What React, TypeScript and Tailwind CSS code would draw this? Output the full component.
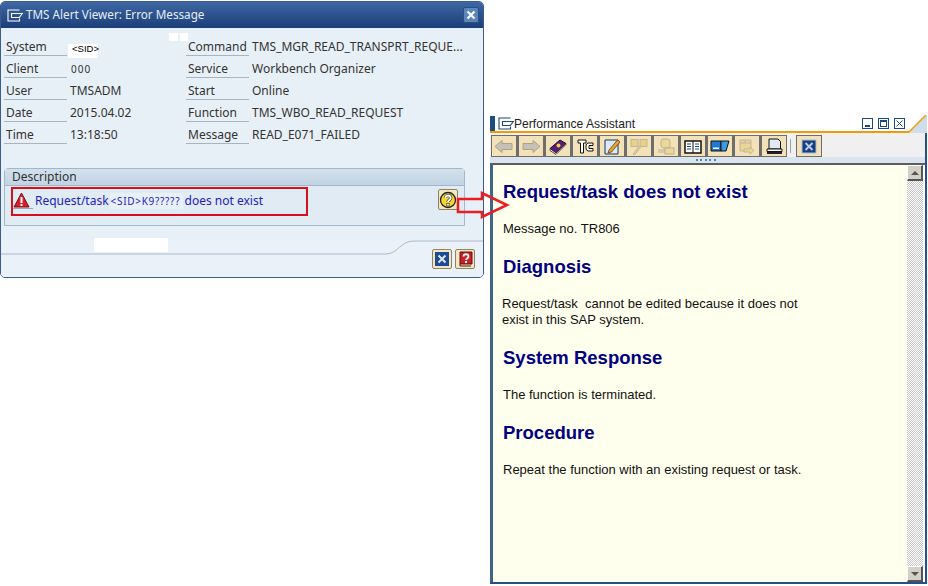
import type { ReactNode } from "react";

const leftRows = [
  ["System", "", "Command", "TMS_MGR_READ_TRANSPRT_REQUE..."],
  ["Client", "000", "Service", "Workbench Organizer"],
  ["User", "TMSADM", "Start", "Online"],
  ["Date", "2015.04.02", "Function", "TMS_WBO_READ_REQUEST"],
  ["Time", "13:18:50", "Message", "READ_E071_FAILED"],
];

function WindowGlyph({ color }: { color: string }) {
  return (
    <svg width="16" height="13" viewBox="0 0 16 13" fill="none" stroke={color} strokeWidth="1.1">
      <path d="M12.5 1H1v11h11.500V9.500M4.500 4.500h10.800l-3 4H4.500z" />
    </svg>
  );
}

function ToolBtn({ children, dim }: { children?: ReactNode; dim?: boolean }) {
  return (
    <div className="w-[24px] h-[20px] bg-[#f3e2b8] flex items-center justify-center">
      <svg width="20" height="17" viewBox="0 0 20 17" className={dim ? "opacity-40" : ""}>
        {children}
      </svg>
    </div>
  );
}

function SmallBtn({ children, tall }: { children: ReactNode; tall?: boolean }) {
  return (
    <div className={`w-[20px] ${tall ? "h-[21px]" : "h-[20px]"} bg-[#f4e7c0] border border-[#8a8468] rounded-[2px] flex items-center justify-center`}>
      {children}
    </div>
  );
}

function CloseIcon({ size = 14 }: { size?: number }) {
  return (
    <svg width={size} height={size} viewBox="0 0 14 14">
      <rect width="14" height="14" fill="#1d4a94" />
      <path d="M3.500 3.500l7 7M10.500 3.500l-7 7" stroke="#dfe8f5" strokeWidth="2" />
    </svg>
  );
}

function Dialog() {
  return (
    <div className="absolute left-0 top-[1px] w-[484px] h-[277px] rounded-[5px] border border-[#3c5c8c] bg-[#e8f0f7] overflow-hidden flex flex-col">
      <div className="h-[26px] shrink-0 bg-gradient-to-b from-[#3f68a4] to-[#1b3e78] flex items-center pl-[6px] pr-[4px] text-[11.700px]">
        <WindowGlyph color="#ffffff" />
        <span className="ml-[3px] text-[#e6edf6]">TMS Alert Viewer: Error Message</span>
        <div className="ml-auto w-[16px] h-[16px] bg-[#5c86b8] border border-[#2b4f82] rounded-[2px] flex items-center justify-center">
          <svg width="10" height="10" viewBox="0 0 10 10">
            <path d="M1.500 1.500l7 7M8.500 1.500l-7 7" stroke="#ffffff" strokeWidth="2" />
          </svg>
        </div>
      </div>

      <div className="pt-[8px] flex flex-col">
        {leftRows.map((r) => (
          <div key={r[0]} className="h-[22px] flex text-[12px] text-[#333333]">
            <div className="w-[63px] h-[20px] ml-[3px] pl-[2px] border-b border-[#a8b4c0] leading-[21px]">{r[0]}</div>
            <div className="w-[119px] leading-[21px]">
              {r[0] === "System" ? (
                <div className="ml-[1px] mt-[8px] bg-white w-[30px] h-[14px] pl-[4px] pt-[1px] font-['Liberation_Sans',sans-serif] text-[9.500px] leading-[8px] text-black">
                  {"<SID>"}
                </div>
              ) : r[0] === "Client" ? (
                <span className="pl-[4px] tracking-[1px] text-[10px]">{r[1]}</span>
              ) : (
                <span className="pl-[3px]">{r[1]}</span>
              )}
            </div>
            <div className="w-[63px] h-[20px] pl-[2px] border-b border-[#a8b4c0] leading-[21px]">{r[2]}</div>
            <div className="pl-[3px] leading-[21px]">{r[3]}</div>
          </div>
        ))}
      </div>

      <div className="mt-[22px] mx-[3px] h-[58px] w-[461px] border border-[#a3b7cb] rounded-t-[4px] bg-[#e1ebf4] flex flex-col">
        <div className="h-[17px] bg-gradient-to-b from-[#d3e1ee] to-[#c1d3e4] border-b border-[#a3b7cb] pl-[7px] text-[12px] leading-[16px] text-[#333333]">
          Description
        </div>
        <div className="flex-1 relative flex items-start pt-[7px] pl-[8px]">
          <div className="w-[20px] h-[17px] -mt-[1px] border-b border-[#9aa8b6]">
            <svg width="17" height="16" viewBox="0 0 17 16">
              <path d="M8.500 1L16 15H1z" fill="#d8202a" stroke="#7a1010" strokeWidth="1" />
              <rect x="7.500" y="5" width="2" height="6" fill="#fff" />
              <rect x="7.500" y="12" width="2" height="2" fill="#fff" />
            </svg>
          </div>
          <span className="ml-[2px] text-[12px] leading-[16px] text-[#2222bb]">Request/task</span>
          <span className="ml-[1px] pl-[1px] text-[10px] tracking-[0.7px] leading-[16px] text-[#2222bb] bg-[#e9f1f8] w-[73px] whitespace-nowrap">{"<SID>K9?????"}</span>
          <span className="ml-[2px] text-[12px] leading-[16px] text-[#2222bb]">does not exist</span>
          <div className="absolute right-[6px] top-[3px]">
            <SmallBtn tall>
              <svg width="18" height="18" viewBox="0 0 18 18">
                <circle cx="9" cy="9" r="7.500" fill="#f8d62e" stroke="#222" strokeWidth="1.300" />
                <path d="M6.300 7c0-3.400 5.400-3.400 5.400 0 0 2.200-2.700 2-2.700 4" fill="none" stroke="#222" strokeWidth="3.100" />
                <path d="M6.300 7c0-3.400 5.400-3.400 5.400 0 0 2.200-2.700 2-2.700 4" fill="none" stroke="#fff" strokeWidth="1.900" />
                <rect x="7.800" y="12.500" width="2.400" height="2.400" fill="#fff" stroke="#222" strokeWidth=".6" />
              </svg>
            </SmallBtn>
          </div>
        </div>
      </div>

      <div className="mt-[14px] flex-1 relative bg-[#eaf1f8] flex items-end justify-end pr-[8px] pb-[8px] gap-[3px]">
        <svg className="absolute left-0 top-0 w-full h-[20px]" viewBox="0 0 482 20" fill="none">
          <path d="M0 14H385C397 14 399 1 413 1H482" stroke="#a9b9c9" strokeWidth="1" />
        </svg>
        <SmallBtn>
          <CloseIcon />
        </SmallBtn>
        <SmallBtn>
          <svg width="15" height="16" viewBox="0 0 15 16">
            <path d="M2 1h12v12H2z" fill="#c8202a" stroke="#5a1010" />
            <path d="M2 13v2h11" fill="none" stroke="#5a1010" />
            <path d="M5.500 5.500c0-3 5-3 5 0 0 2-2.500 1.800-2.500 3.500" fill="none" stroke="#fff" strokeWidth="1.800" />
            <rect x="7" y="10" width="2" height="2" fill="#fff" />
          </svg>
        </SmallBtn>
      </div>
    </div>
  );
}

function Assistant() {
  return (
    <div className="absolute left-[490px] top-[115px] w-[437px] h-[469px] flex flex-col bg-[#f0f0f0] border-r-2 border-b-2 border-[#23508a] font-['Liberation_Sans',sans-serif]">
      <div className="h-[18px] shrink-0 bg-white border-b-[2px] border-[#f59a00] flex items-center relative">
        <div className="w-[5px] h-[15px] bg-[#1c4e80]" />
        <div className="ml-[3px] flex items-center">
          <WindowGlyph color="#17497f" />
        </div>
        <span className="text-[12.100px] leading-none mt-[2px] text-[#222]">Performance Assistant</span>
        <div className="absolute right-[20px] top-[3px] flex gap-[5px]">
          {[0, 1, 2].map((i) => (
            <div key={i} className="w-[11px] h-[11px] border border-[#17497f] bg-white relative flex items-center justify-center">
              {i === 0 && <div className="absolute left-[2px] bottom-[1px] w-[5px] h-[2px] bg-[#17497f]" />}
              {i === 1 && <div className="w-[7px] h-[7px] border border-[#17497f] border-t-2" />}
              {i === 2 && (
                <svg width="7" height="7" viewBox="0 0 7 7">
                  <path d="M.5.5l6 6M6.500.5l-6 6" stroke="#17497f" strokeWidth="1" />
                </svg>
              )}
            </div>
          ))}
        </div>
        <svg className="absolute right-[-2px] bottom-[-2px]" width="18" height="18" viewBox="0 0 18 18">
          <path d="M0 17L17 0H18V18H0z" fill="#cfdcea" />
          <path d="M0 17L17 0" stroke="#f59a00" strokeWidth="1.500" />
        </svg>
      </div>

      <div className="h-[24px] shrink-0 flex items-center pl-[1px] pt-[2px]">
        <div className="flex gap-[3px] bg-[#6e6e6e] py-[1px] px-[1px]">
          <ToolBtn dim>
            <path d="M1 8.500L8 2.500v3h10v6H8v3z" fill="#7f93b5" stroke="#444" />
          </ToolBtn>
          <ToolBtn dim>
            <path d="M19 8.500L12 2.500v3H2v6h10v3z" fill="#7f93b5" stroke="#444" />
          </ToolBtn>
          <ToolBtn>
            <path d="M2 10.500L12 2l6 3.500L8 15z" fill="#5a1a7a" stroke="#1c1028" />
            <path d="M2 10.500v2L8 16.500l10-10V5.500L8 15z" fill="#f5f0e0" stroke="#1c1028" strokeWidth=".7" />
            <circle cx="10.500" cy="7.500" r="2" fill="#f0d040" />
          </ToolBtn>
          <ToolBtn>
            <path d="M3 2h8v3H8.500v10h-3V5H3z" fill="#fff" stroke="#111" />
            <path d="M18 5h-5a3 3 0 0 0-2 3v2a3 3 0 0 0 2 3h5v-2.500h-4v-3h4z" fill="#fff" stroke="#111" />
          </ToolBtn>
          <ToolBtn>
            <path d="M3 2h13v14H3z" fill="#dbe8f5" stroke="#17395f" />
            <path d="M7 12l8.500-10 2.500 2-8.500 10-3.500 1z" fill="#f2a01e" stroke="#333" strokeWidth=".7" />
          </ToolBtn>
          <ToolBtn dim>
            <rect x="2" y="1.500" width="7" height="7" fill="#e0b840" stroke="#777" />
            <rect x="11" y="1.500" width="7" height="7" fill="#e0b840" stroke="#777" />
            <path d="M4 16l7-9 1.500 1-7 9z" fill="#e0b840" stroke="#777" />
          </ToolBtn>
          <ToolBtn dim>
            <path d="M5 8V3.500a2.500 2.500 0 0 1 2.500-2.500h4a2.500 2.500 0 0 1 2.500 2.500V9l-3 1H7z" fill="#e6c868" stroke="#666" />
            <rect x="9" y="10" width="9" height="6" fill="#e6c868" stroke="#666" />
            <path d="M2 12h7M2 14h7" stroke="#666" />
          </ToolBtn>
          <ToolBtn>
            <path d="M2 3h16v12H2z" fill="#fff" stroke="#111" strokeWidth="1.500" />
            <path d="M10 3v12" stroke="#111" />
            <path d="M4 6h4M4 8.500h4M4 11h4M12 6h4M12 8.500h4M12 11h4" stroke="#17497f" />
          </ToolBtn>
          <ToolBtn>
            <path d="M1 3h10v10H1z" fill="#1e78d0" stroke="#111" />
            <path d="M11 3h8l-3 10h-5z" fill="#3a9ae6" stroke="#111" />
            <rect x="3" y="9.500" width="6" height="1.500" fill="#fff" />
          </ToolBtn>
          <ToolBtn dim>
            <path d="M3 2h11v11H3z" fill="#e0c068" stroke="#777" />
            <path d="M3 5h11M8 2v3" stroke="#777" />
            <path d="M7 11h6V9l4 3.500-4 3.500v-2H7z" fill="#f0d040" stroke="#777" />
          </ToolBtn>
          <ToolBtn>
            <path d="M5 1h9l2.500 2.500V11H5z" fill="#dfeaf5" stroke="#111" />
            <path d="M3 11h15v2.500H3z" fill="#fff" stroke="#111" />
            <path d="M3 14h15v2H3z" fill="#222" />
          </ToolBtn>
        </div>
        <div className="ml-[3px] w-[1px] h-[14px] bg-[#a0a0a0]" />
        <div className="ml-[5px] bg-[#6e6e6e] py-[1px] px-[1px]">
          <ToolBtn>
            <rect x="3" y="2" width="14" height="13" fill="#16417c" stroke="#a8bde0" />
            <path d="M6.500 5l7 7M13.500 5l-7 7" stroke="#b8cbe8" strokeWidth="2" />
          </ToolBtn>
        </div>
      </div>

      <div className="h-[6px] shrink-0 bg-[#d9e4ef] flex justify-center gap-[2.500px] pt-[2px] pr-[4px]">
        {[0, 1, 2, 3, 4].map((i) => (
          <div key={i} className="w-[2px] h-[2px] bg-[#4d7fb0]" />
        ))}
      </div>

      <div className="flex-1 min-h-0 flex border-t-2 border-t-[#5c5c5c] border-l-[3px] border-l-[#3e6488]">
        <div className="flex-1 bg-[#ffffee] pl-[10px] pt-[17px] text-[13px] text-[#111]">
          <h2 className="text-[18.500px] font-bold leading-[20px] text-[#000080]">Request/task does not exist</h2>
          <p className="mt-[19px] leading-[16px]">Message no. TR806</p>
          <h2 className="mt-[20px] text-[18.500px] font-bold leading-[20px] text-[#000080]">Diagnosis</h2>
          <p className="mt-[19px] -ml-[1px] leading-[16px]">
            Request/task &nbsp;cannot be edited because it does not
            <br />
            exist in this SAP system.
          </p>
          <h2 className="mt-[20px] text-[18.500px] font-bold leading-[20px] text-[#000080]">System Response</h2>
          <p className="mt-[19px] leading-[16px]">The function is terminated.</p>
          <h2 className="mt-[20px] text-[18.500px] font-bold leading-[20px] text-[#000080]">Procedure</h2>
          <p className="mt-[19px] leading-[16px]">Repeat the function with an existing request or task.</p>
        </div>
        <div className="w-[16px] shrink-0 flex flex-col bg-[repeating-conic-gradient(#c8c8c8_0%_25%,#ffffff_0%_50%)] bg-[length:2px_2px]">
          <div className="h-[16px] bg-[#d4d0c8] border-t border-l border-white border-r-2 border-b-2 border-r-[#555] border-b-[#555] flex items-center justify-center">
            <div className="w-0 h-0 border-x-[4px] border-x-transparent border-b-[4px] border-b-[#555]" />
          </div>
          <div className="flex-1" />
          <div className="h-[16px] bg-[#d4d0c8] border-t border-l border-white border-r-2 border-b-2 border-r-[#555] border-b-[#555] flex items-center justify-center">
            <div className="w-0 h-0 border-x-[4px] border-x-transparent border-t-[4px] border-t-[#555]" />
          </div>
        </div>
        <div className="w-[2px] shrink-0 bg-white" />
      </div>
    </div>
  );
}

export default function App() {
  return (
    <div className="relative w-[928px] h-[586px] overflow-hidden bg-white font-['Noto_Sans',sans-serif]">
      <Dialog />
      <Assistant />
      {/* white retouch patches and red annotations over the screenshot */}
      <div className="absolute left-[169px] top-[33px] w-[9px] h-[8px] bg-white" />
      <div className="absolute left-[180px] top-[33px] w-[8px] h-[8px] bg-white" />
      <div className="absolute left-[94px] top-[238px] w-[74px] h-[14px] bg-white" />
      <div className="absolute left-[11px] top-[187px] w-[297px] h-[29px] border-2 border-[#d8101c]" />
      <svg className="absolute left-[456px] top-[190px]" width="54" height="30" viewBox="0 0 54 30" fill="none">
        <path d="M2 9H26V3L51 15L26 27V22H2z" stroke="#ec1c24" strokeWidth="2.500" />
      </svg>
    </div>
  );
}
